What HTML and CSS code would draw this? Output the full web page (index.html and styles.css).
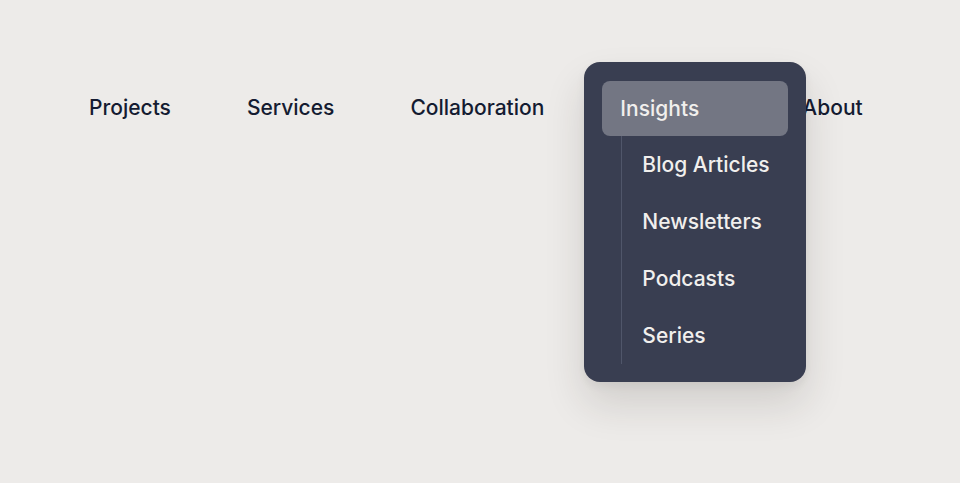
FILE: index.html
```html
<!DOCTYPE html>
<html lang="en">
<head>
<meta charset="utf-8">
<title>Navigation</title>
<link rel="stylesheet" href="styles.css">
</head>
<body>
<nav class="nav">
  <ul class="nav-list">
    <li class="nav-item"><a class="nav-link" href="#">Projects</a></li>
    <li class="nav-item"><a class="nav-link" href="#">Services</a></li>
    <li class="nav-item"><a class="nav-link" href="#">Collaboration</a></li>
    <li class="nav-item nav-item--open">
      <a class="nav-link" href="#">Insights</a>
      <div class="dropdown">
        <a class="dropdown-head" href="#">Insights</a>
        <ul class="dropdown-list">
          <li><a class="dropdown-link" href="#">Blog Articles</a></li>
          <li><a class="dropdown-link" href="#">Newsletters</a></li>
          <li><a class="dropdown-link" href="#">Podcasts</a></li>
          <li><a class="dropdown-link" href="#">Series</a></li>
        </ul>
      </div>
    </li>
    <li class="nav-item"><a class="nav-link" href="#">About</a></li>
  </ul>
</nav>
</body>
</html>
```

FILE: styles.css
```css
html, body {
  margin: 0;
  padding: 0;
}

body {
  background: #edebe9;
  font-family: Inter, "Noto Sans", "Liberation Sans", sans-serif;
  width: 960px;
  height: 483px;
  overflow: hidden;
}

.nav {
  padding: 80px 0 0 71px;
}

.nav-list {
  list-style: none;
  margin: 0;
  padding: 0;
  display: flex;
  gap: 40px;
}

.nav-item {
  position: relative;
}

.nav-item--open {
  width: 142px;
}

.nav-link {
  display: flex;
  align-items: center;
  height: 55px;
  padding: 0 18px;
  color: #141b31;
  font-size: 21px;
  font-weight: 450;
  text-decoration: none;
}

.dropdown {
  position: absolute;
  left: -18px;
  top: -18px;
  width: 186px;
  padding: 19px 18px 18px;
  background: #393e51;
  border-radius: 16px;
  box-shadow: 0 22px 40px rgba(40, 36, 30, 0.14), 0 4px 10px rgba(40, 36, 30, 0.06);
  z-index: 2;
}

.dropdown-head {
  display: flex;
  align-items: center;
  height: 55px;
  padding: 0 18px;
  background: #737683;
  border-radius: 8px;
  color: #f1efed;
  font-size: 21px;
  font-weight: 450;
  text-decoration: none;
}

.dropdown-list {
  list-style: none;
  margin: 0 0 0 19px;
  padding: 0;
  border-left: 1px solid #50566a;
}

.dropdown-link {
  display: flex;
  align-items: center;
  height: 57px;
  padding: 0 0 0 20px;
  color: #f1efed;
  font-size: 21px;
  font-weight: 450;
  text-decoration: none;
}
```
